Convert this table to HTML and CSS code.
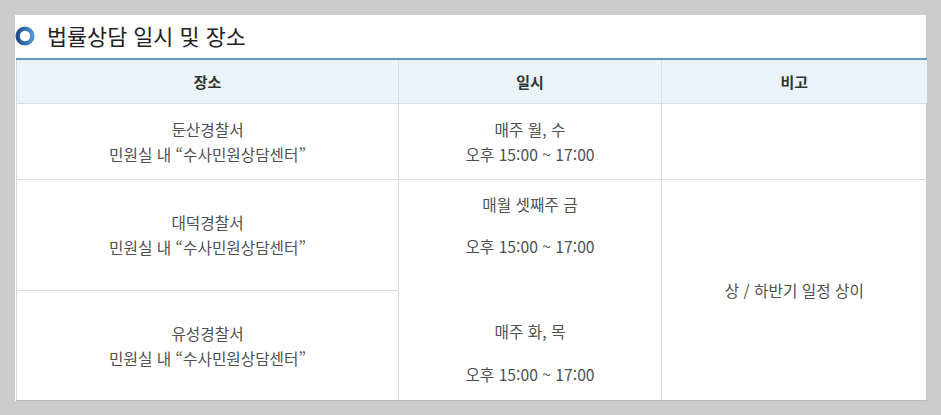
FILE: index.html
```html
<!DOCTYPE html>
<html lang="ko">
<head>
<meta charset="utf-8">
<title>법률상담 일시 및 장소</title>
<link rel="stylesheet" href="styles.css">
</head>
<body>
<div class="panel">
  <h2 class="title">
    <svg class="ring" width="20" height="20" viewBox="0 0 20 20" aria-hidden="true">
      <defs>
        <linearGradient id="rg" x1="0" y1="0" x2="1" y2="0">
          <stop offset="0" stop-color="#1d4f8e"/>
          <stop offset="1" stop-color="#4d94d6"/>
        </linearGradient>
      </defs>
      <circle cx="10" cy="10" r="7.4" fill="none" stroke="url(#rg)" stroke-width="4.4"/>
    </svg>
    <span>법률상담 일시 및 장소</span>
  </h2>
  <table class="schedule">
    <colgroup>
      <col class="c1"><col class="c2"><col class="c3">
    </colgroup>
    <thead>
      <tr><th>장소</th><th>일시</th><th>비고</th></tr>
    </thead>
    <tbody>
      <tr class="r1">
        <td>둔산경찰서<br>민원실 내 “수사민원상담센터”</td>
        <td>매주 월, 수<br>오후 15:00 ~ 17:00</td>
        <td></td>
      </tr>
      <tr class="r2">
        <td>대덕경찰서<br>민원실 내 “수사민원상담센터”</td>
        <td rowspan="2" class="merged">매월 셋째주 금<br>오후 15:00 ~ 17:00<br><br>매주 화, 목<br>오후 15:00 ~ 17:00</td>
        <td rowspan="2">상 / 하반기 일정 상이</td>
      </tr>
      <tr class="r3">
        <td>유성경찰서<br>민원실 내 “수사민원상담센터”</td>
      </tr>
    </tbody>
  </table>
</div>
</body>
</html>
```

FILE: styles.css
```css
html, body {
  margin: 0;
  padding: 0;
}
body {
  background: #cbcbcb;
  padding: 15px 15px 0 15px;
  font-family: "Noto Sans CJK KR", "Noto Sans", sans-serif;
}
.panel {
  width: 910px;
  background: #fff;
  padding-left: 1px;
  box-shadow: 0 1px 0 #b5b5b5;
}
.title {
  margin: 0;
  height: 43px;
  display: flex;
  align-items: center;
  gap: 12px;
  font-size: 21.8px;
  font-weight: normal;
  color: #222;
  padding-bottom: 2px;
  box-sizing: border-box;
}
.ring {
  display: block;
  margin-left: -1px;
  margin-top: 1px;
}
.schedule {
  width: 910px;
  border-collapse: collapse;
  table-layout: fixed;
  border-top: 2px solid #6299c1;
  font-size: 15.7px;
  color: #505050;
}
.c1 { width: 382px; }
.c2 { width: 263px; }
.c3 { width: 265px; }
.schedule th {
  height: 43px;
  padding: 0;
  background: #eaf3f9;
  color: #333;
  font-weight: bold;
  font-size: 15px;
  border: 1px solid #dcdcdc;
  border-top: none;
}
.schedule td {
  border: 1px solid #dcdcdc;
  text-align: center;
  vertical-align: middle;
  line-height: 25px;
  padding: 0;
}
.schedule tr > :first-child { border-left-color: #d6d6d6; }
.schedule tr > :last-child { border-right: none; }
.r1 td { height: 75px; }
.r2 td { height: 110px; }
.r3 td { height: 109px; border-bottom-color: #bdbdbd; }
.schedule .merged { line-height: 42.5px; border-bottom-color: #bdbdbd; }
.r2 td[rowspan] { border-bottom-color: #bdbdbd; }
```
